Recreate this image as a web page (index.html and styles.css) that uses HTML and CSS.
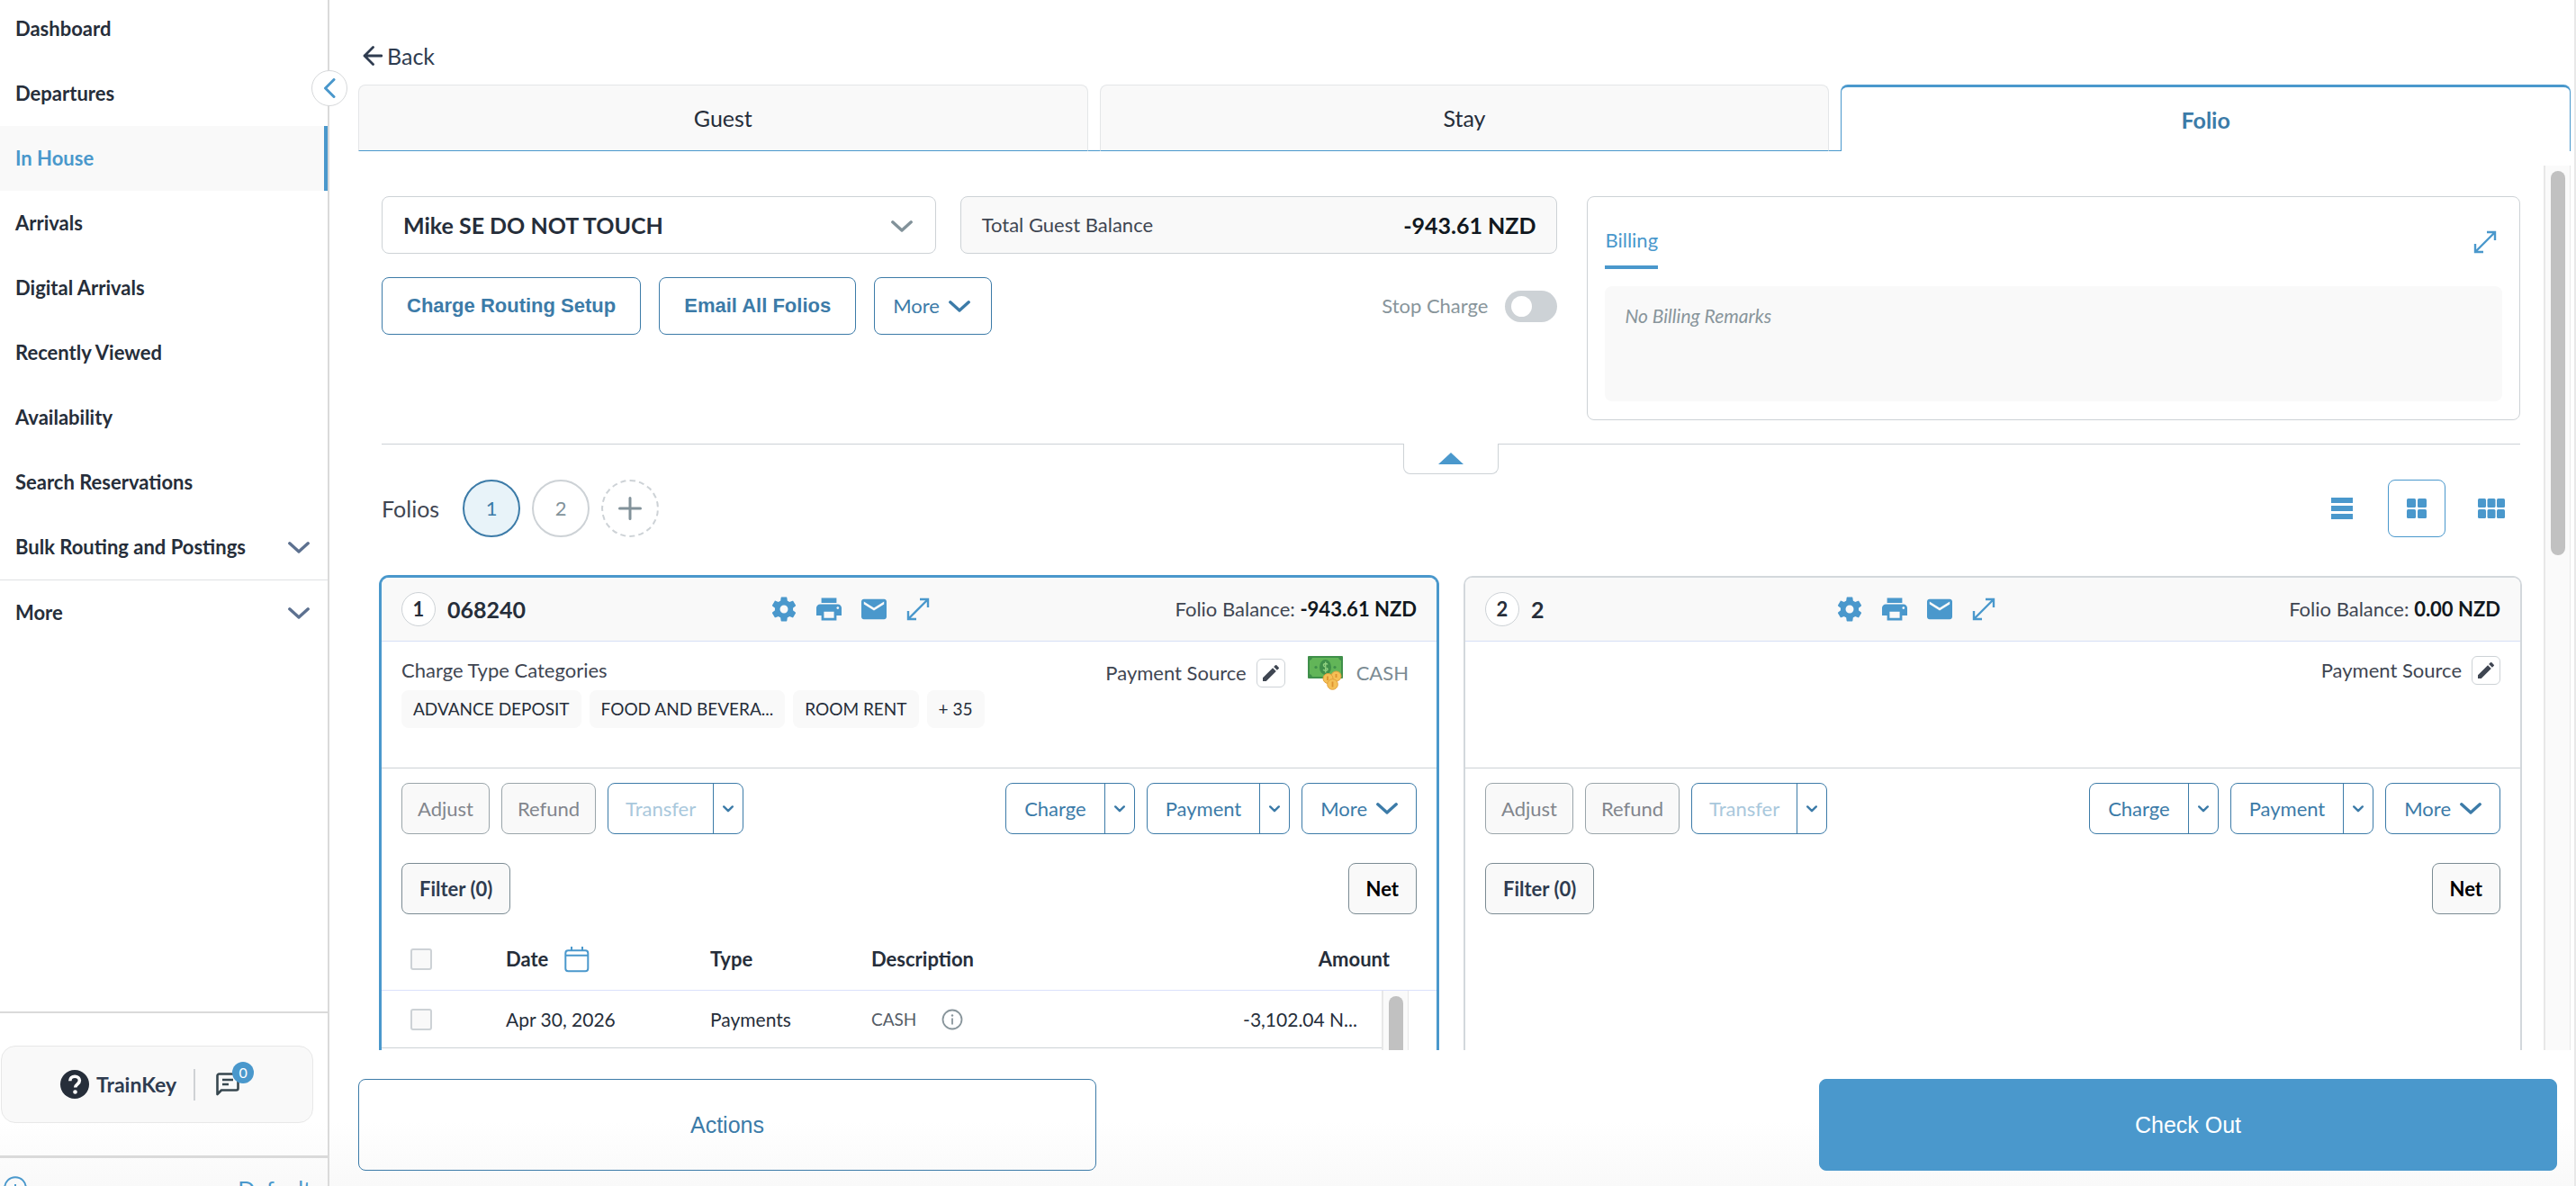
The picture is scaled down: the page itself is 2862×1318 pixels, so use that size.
FILE: index.html
```html
<!DOCTYPE html>
<html lang="en">
<head>
  <meta charset="UTF-8">
  <meta name="viewport" content="width=device-width, initial-scale=1.0">
  <title>In House - Folio</title>
  <link rel="stylesheet" href="styles.css">
</head>
<body>

  <!-- Shared icons -->
  <svg class="icon-defs" aria-hidden="true">
    <symbol id="chevron" viewBox="0 0 24 13"><path d="M1.8 1.8 12 11 22.2 1.8" fill="none" stroke="currentColor" stroke-width="3.4" stroke-linecap="round" stroke-linejoin="round"/></symbol>
    <symbol id="chevron-small" viewBox="0 0 12 8"><path d="M1.2 1.4 6 6.2 10.8 1.4" fill="none" stroke="currentColor" stroke-width="2.4" stroke-linecap="round" stroke-linejoin="round"/></symbol>
    <symbol id="expand" viewBox="0 0 26 26"><path d="M15 2H24V11M24 2 2 24M2 15V24H11" fill="none" stroke="currentColor" stroke-width="2.4"/></symbol>
    <symbol id="gear" viewBox="2 2 20 20"><path fill="currentColor" d="M19.14 12.94c.04-.3.06-.61.06-.94 0-.32-.02-.64-.07-.94l2.03-1.58c.18-.14.23-.41.12-.61l-1.92-3.32c-.12-.22-.37-.29-.59-.22l-2.39.96c-.5-.38-1.03-.7-1.62-.94l-.36-2.54c-.04-.24-.24-.41-.48-.41h-3.84c-.24 0-.43.17-.47.41l-.36 2.54c-.59.24-1.13.57-1.62.94l-2.39-.96c-.22-.08-.47 0-.59.22L2.74 8.87c-.12.21-.08.47.12.61l2.03 1.58c-.05.3-.09.63-.09.94s.02.64.07.94l-2.03 1.58c-.18.14-.23.41-.12.61l1.92 3.32c.12.22.37.29.59.22l2.39-.96c.5.38 1.03.7 1.62.94l.36 2.54c.05.24.24.41.48.41h3.84c.24 0 .44-.17.47-.41l.36-2.54c.59-.24 1.13-.56 1.62-.94l2.39.96c.22.08.47 0 .59-.22l1.92-3.32c.12-.22.07-.47-.12-.61l-2.01-1.58zM12 15.2a3.2 3.2 0 1 1 0-6.4 3.2 3.2 0 0 1 0 6.4z"/></symbol>
    <symbol id="printer" viewBox="2 2 20 20"><path fill="currentColor" d="M19 8H5c-1.66 0-3 1.34-3 3v6h4v4h12v-4h4v-6c0-1.66-1.34-3-3-3zm-3 11H8v-5h8v5zm3-7c-.55 0-1-.45-1-1s.45-1 1-1 1 .45 1 1-.45 1-1 1zm-1-9H6v4h12V3z"/></symbol>
    <symbol id="mail" viewBox="2 2 20 20"><path fill="currentColor" d="M20 4H4c-1.1 0-2 .9-2 2v12c0 1.1.9 2 2 2h16c1.1 0 2-.9 2-2V6c0-1.1-.9-2-2-2zm0 4-8 5-8-5V6l8 5 8-5v2z"/></symbol>
    <symbol id="pencil" viewBox="0 0 24 24"><path fill="currentColor" d="M3 17.25V21h3.75L17.81 9.94l-3.75-3.75L3 17.25zM20.71 7.04a1 1 0 0 0 0-1.41l-2.34-2.34a1 1 0 0 0-1.41 0l-1.83 1.83 3.75 3.75 1.83-1.83z"/></symbol>
  </svg>

  <div class="app">
    <aside class="sidebar">
      <button type="button" class="collapse-btn" aria-label="Collapse menu">
        <svg width="14" height="22" viewBox="0 0 14 22"><path d="M12 1.5 2.5 11 12 20.5" fill="none" stroke="currentColor" stroke-width="3" stroke-linecap="round" stroke-linejoin="round"/></svg>
      </button>

      <nav class="nav">
        <a href="#">Dashboard</a>
        <a href="#">Departures</a>
        <a href="#" class="active">In House</a>
        <a href="#">Arrivals</a>
        <a href="#">Digital Arrivals</a>
        <a href="#">Recently Viewed</a>
        <a href="#">Availability</a>
        <a href="#">Search Reservations</a>
        <a href="#" class="group">Bulk Routing and Postings <svg class="chevron"><use href="#chevron"/></svg></a>
        <a href="#">More <svg class="chevron"><use href="#chevron"/></svg></a>
      </nav>

      <div class="help">
        <div class="help-box">
          <svg width="32" height="32" viewBox="0 0 32 32"><circle cx="16" cy="16" r="16" fill="#262e3a"/><path d="M10.8 12.2c0-3 2.2-5 5.3-5s5.3 1.9 5.3 4.6c0 4-4.7 4-4.7 7.7" fill="none" stroke="#fff" stroke-width="3.6"/><circle cx="16.5" cy="24.5" r="2.3" fill="#fff"/></svg>
          <span class="help-name">TrainKey</span>
          <span class="help-divider"></span>
          <button type="button" class="chat-btn" aria-label="Messages">
            <svg width="26" height="26" viewBox="0 0 26 26"><path d="M1.5 24V3.5a2 2 0 0 1 2-2h19a2 2 0 0 1 2 2v14a2 2 0 0 1-2 2H6z" fill="none" stroke="currentColor" stroke-width="2.6" stroke-linejoin="round"/><path d="M7 8h12M7 13h7" stroke="currentColor" stroke-width="2.4"/></svg>
            <span class="badge">0</span>
          </button>
        </div>
      </div>

      <div class="default-row">
        <svg width="26" height="26" viewBox="0 0 26 26"><circle cx="13" cy="13" r="11.8" fill="none" stroke="currentColor" stroke-width="2"/><path d="M13 9v10" stroke="currentColor" stroke-width="2"/></svg>
        <a href="#">Default</a>
      </div>
    </aside>

    <main class="main">
      <a href="#" class="back">
        <svg width="22" height="22" viewBox="0 0 22 22"><path d="M21 11H2M11.5 1.5 2 11l9.5 9.5" fill="none" stroke="currentColor" stroke-width="2.8" stroke-linecap="round" stroke-linejoin="round"/></svg>
        Back
      </a>

      <div class="tabs">
        <button type="button" class="tab">Guest</button>
        <span class="tab-gap"></span>
        <button type="button" class="tab">Stay</button>
        <span class="tab-gap"></span>
        <button type="button" class="tab active">Folio</button>
      </div>

      <div class="scroller">
        <div class="content">

          <section class="summary">
            <div class="account">
              <div class="select-wrap">
                <select aria-label="Guest">
                  <option>Mike SE DO NOT TOUCH</option>
                </select>
                <svg class="chevron"><use href="#chevron"/></svg>
              </div>
              <div class="balance">
                <span>Total Guest Balance</span>
                <strong>-943.61 NZD</strong>
              </div>
              <div class="account-actions">
                <button type="button" class="btn-system">Charge Routing Setup</button>
                <button type="button" class="btn-system">Email All Folios</button>
                <button type="button" class="btn-outline tall">More <svg class="chevron"><use href="#chevron"/></svg></button>
                <label class="stop-charge" for="stopCharge">Stop Charge</label>
                <input type="checkbox" id="stopCharge" class="toggle">
              </div>
            </div>

            <div class="billing">
              <div class="billing-head">
                <button type="button" class="billing-tab">Billing</button>
                <button type="button" class="icon-btn" aria-label="Expand"><svg width="26" height="26"><use href="#expand"/></svg></button>
              </div>
              <div class="remarks">No Billing Remarks</div>
            </div>

            <button type="button" class="section-toggle" aria-label="Hide summary">
              <svg width="28" height="13" viewBox="0 0 28 13"><path d="M14 0 28 13H0z" fill="currentColor"/></svg>
            </button>
          </section>

          <div class="folio-bar">
            <span class="folio-title">Folios</span>
            <button type="button" class="circle active">1</button>
            <button type="button" class="circle">2</button>
            <button type="button" class="circle add" aria-label="Add folio">
              <svg width="26" height="26" viewBox="0 0 26 26"><path d="M13 1.5v23M1.5 13h23" stroke="currentColor" stroke-width="3" stroke-linecap="round"/></svg>
            </button>
            <div class="views">
              <button type="button" class="view" aria-label="List view">
                <svg width="24" height="24" viewBox="0 0 24 24"><path d="M0 0h24v6H0zM0 9h24v6H0zM0 18h24v6H0z" fill="currentColor"/></svg>
              </button>
              <button type="button" class="view active" aria-label="Two column view">
                <svg width="22" height="22" viewBox="0 0 22 22" fill="currentColor"><rect width="10" height="10" rx="1.5"/><rect x="12" width="10" height="10" rx="1.5"/><rect y="12" width="10" height="10" rx="1.5"/><rect x="12" y="12" width="10" height="10" rx="1.5"/></svg>
              </button>
              <button type="button" class="view" aria-label="Three column view">
                <svg width="30" height="22" viewBox="0 0 30 22" fill="currentColor"><rect width="9" height="10" rx="1.5"/><rect x="10.500" width="9" height="10" rx="1.5"/><rect x="21" width="9" height="10" rx="1.5"/><rect y="12" width="9" height="10" rx="1.5"/><rect x="10.500" y="12" width="9" height="10" rx="1.5"/><rect x="21" y="12" width="9" height="10" rx="1.5"/></svg>
              </button>
            </div>
          </div>

          <div class="folios">
            <article class="folio active">
              <header class="folio-head">
                <h2><span class="num">1</span> 068240</h2>
                <div class="folio-tools">
                  <button type="button" class="icon-btn" aria-label="Settings"><svg width="28" height="28"><use href="#gear"/></svg></button>
                  <button type="button" class="icon-btn" aria-label="Print"><svg width="28" height="28"><use href="#printer"/></svg></button>
                  <button type="button" class="icon-btn" aria-label="Email"><svg width="28" height="28"><use href="#mail"/></svg></button>
                  <button type="button" class="icon-btn" aria-label="Expand"><svg width="26" height="26"><use href="#expand"/></svg></button>
                </div>
                <div>Folio Balance: <strong>-943.61 NZD</strong></div>
              </header>

              <div class="folio-info">
                <div class="categories">
                  <div>Charge Type Categories</div>
                  <ul class="chips">
                    <li>ADVANCE DEPOSIT</li>
                    <li>FOOD AND BEVERA...</li>
                    <li>ROOM RENT</li>
                    <li>+ 35</li>
                  </ul>
                </div>
                <div class="source">
                  Payment Source
                  <button type="button" class="edit-btn" aria-label="Edit payment source"><svg width="24" height="24"><use href="#pencil"/></svg></button>
                  <span class="method">
                    <svg width="40" height="38" viewBox="0 0 40 38">
                      <rect width="39" height="25" rx="1" fill="#3f8f4a"/>
                      <path d="M5 2h29a4 4 0 0 0 3 3v15a4 4 0 0 0-3 3H5a4 4 0 0 0-3-3V5a4 4 0 0 0 3-3z" fill="#62b558"/>
                      <ellipse cx="19.5" cy="12.5" rx="6.5" ry="8.5" fill="#3f8f4a"/>
                      <path d="M22 9.5c-.6-1.2-4.6-1.6-4.6.8 0 2.6 4.6 1.6 4.6 4.2 0 2.4-4.2 2.2-4.8.6M19.7 6.5v12" fill="none" stroke="#8fd07f" stroke-width="1.4"/>
                      <circle cx="9" cy="12.5" r="1.6" fill="#3f8f4a"/><circle cx="30" cy="12.5" r="1.6" fill="#3f8f4a"/>
                      <g fill="#f5c056" stroke="#e2a03c"><circle cx="31.5" cy="22.5" r="5.5"/><circle cx="22.5" cy="25" r="5.5"/><circle cx="27.5" cy="31.5" r="5.8"/></g>
                      <path d="M27.5 28.5v6M22 22.5v4.5M31.5 20v4" stroke="#dd9230" stroke-width="1.8"/>
                    </svg>
                    CASH
                  </span>
                </div>
              </div>

              <div class="folio-body">
                <div class="row">
                  <button type="button" class="btn-gray" disabled>Adjust</button>
                  <button type="button" class="btn-gray" disabled>Refund</button>
                  <div class="split">
                    <button type="button" disabled>Transfer</button>
                    <button type="button" class="arrow" aria-label="Transfer options"><svg width="12" height="8"><use href="#chevron-small"/></svg></button>
                  </div>
                  <div class="row-right">
                    <div class="split">
                      <button type="button">Charge</button>
                      <button type="button" class="arrow" aria-label="Charge options"><svg width="12" height="8"><use href="#chevron-small"/></svg></button>
                    </div>
                    <div class="split">
                      <button type="button">Payment</button>
                      <button type="button" class="arrow" aria-label="Payment options"><svg width="12" height="8"><use href="#chevron-small"/></svg></button>
                    </div>
                    <button type="button" class="btn-outline">More <svg class="chevron"><use href="#chevron"/></svg></button>
                  </div>
                </div>
                <div class="row">
                  <button type="button" class="btn-filter">Filter (0)</button>
                  <div class="row-right"><button type="button" class="btn-filter net">Net</button></div>
                </div>
              </div>

              <table class="charges">
                <colgroup>
                  <col class="col-check"><col class="col-date"><col class="col-type"><col><col class="col-amount"><col class="col-rail">
                </colgroup>
                <thead>
                  <tr>
                    <th class="check"><input type="checkbox" aria-label="Select all"></th>
                    <th>
                      <span class="date-head">Date
                        <svg width="28" height="29" viewBox="0 0 28 29"><rect x="1.3" y="4.3" width="25" height="23" rx="3" fill="none" stroke="currentColor" stroke-width="2"/><path d="M1.3 9.8h25M8 0v4M20 0v4" stroke="currentColor" stroke-width="2"/></svg>
                      </span>
                    </th>
                    <th>Type</th>
                    <th>Description</th>
                    <th class="amount" colspan="2">Amount</th>
                  </tr>
                </thead>
                <tbody>
                  <tr>
                    <td class="check"><input type="checkbox" aria-label="Select charge"></td>
                    <td>Apr 30, 2026</td>
                    <td>Payments</td>
                    <td>
                      <span class="desc">CASH
                        <svg width="24" height="24" viewBox="0 0 24 24"><circle cx="12" cy="12" r="10.5" fill="none" stroke="currentColor" stroke-width="1.8"/><path d="M12 10.5v7" stroke="currentColor" stroke-width="1.8"/><circle cx="12" cy="7.5" r="1.2" fill="currentColor"/></svg>
                      </span>
                    </td>
                    <td class="amount">-3,102.04 N...</td>
                    <td class="rail-cell"><div class="rail"><div class="thumb"></div></div></td>
                  </tr>
                </tbody>
              </table>
            </article>

            <article class="folio">
              <header class="folio-head">
                <h2><span class="num">2</span> 2</h2>
                <div class="folio-tools">
                  <button type="button" class="icon-btn" aria-label="Settings"><svg width="28" height="28"><use href="#gear"/></svg></button>
                  <button type="button" class="icon-btn" aria-label="Print"><svg width="28" height="28"><use href="#printer"/></svg></button>
                  <button type="button" class="icon-btn" aria-label="Email"><svg width="28" height="28"><use href="#mail"/></svg></button>
                  <button type="button" class="icon-btn" aria-label="Expand"><svg width="26" height="26"><use href="#expand"/></svg></button>
                </div>
                <div>Folio Balance: <strong>0.00 NZD</strong></div>
              </header>

              <div class="folio-info">
                <div class="source">
                  Payment Source
                  <button type="button" class="edit-btn" aria-label="Edit payment source"><svg width="24" height="24"><use href="#pencil"/></svg></button>
                </div>
              </div>

              <div class="folio-body">
                <div class="row">
                  <button type="button" class="btn-gray" disabled>Adjust</button>
                  <button type="button" class="btn-gray" disabled>Refund</button>
                  <div class="split">
                    <button type="button" disabled>Transfer</button>
                    <button type="button" class="arrow" aria-label="Transfer options"><svg width="12" height="8"><use href="#chevron-small"/></svg></button>
                  </div>
                  <div class="row-right">
                    <div class="split">
                      <button type="button">Charge</button>
                      <button type="button" class="arrow" aria-label="Charge options"><svg width="12" height="8"><use href="#chevron-small"/></svg></button>
                    </div>
                    <div class="split">
                      <button type="button">Payment</button>
                      <button type="button" class="arrow" aria-label="Payment options"><svg width="12" height="8"><use href="#chevron-small"/></svg></button>
                    </div>
                    <button type="button" class="btn-outline">More <svg class="chevron"><use href="#chevron"/></svg></button>
                  </div>
                </div>
                <div class="row">
                  <button type="button" class="btn-filter">Filter (0)</button>
                  <div class="row-right"><button type="button" class="btn-filter net">Net</button></div>
                </div>
              </div>
            </article>
          </div>

        </div>
        <div class="rail page-rail"><div class="thumb"></div></div>
      </div>

      <footer class="footer">
        <button type="button" class="footer-btn">Actions</button>
        <button type="button" class="footer-btn primary">Check Out</button>
      </footer>
    </main>
  </div>

</body>
</html>
```
FILE: styles.css
```css
* {
  margin: 0;
  padding: 0;
  box-sizing: border-box;
}

body {
  font-family: Lato, "Open Sans", sans-serif;
  font-size: 22px;
  line-height: 28px;
  color: #3f4652;
  background: #fff;
}

a {
  color: inherit;
  text-decoration: none;
}

button, select {
  font: inherit;
  color: inherit;
  background: none;
  border: none;
  cursor: pointer;
}

svg {
  display: block;
  flex: none;
}

.icon-defs {
  position: absolute;
  width: 0;
  height: 0;
}

.chevron {
  width: 24px;
  height: 13px;
}

.app {
  display: flex;
  height: 100vh;
  overflow: hidden;
  background: linear-gradient(to top, #f9f9f9, #fff 72px);
}

/* Sidebar */
.sidebar {
  position: relative;
  display: flex;
  flex-direction: column;
  flex: none;
  width: 366px;
  border-right: 2px solid #dadada;
}

.collapse-btn {
  position: absolute;
  top: 78px;
  right: -22px;
  display: flex;
  align-items: center;
  justify-content: center;
  width: 40px;
  height: 40px;
  background: #fff;
  border: 1px solid #d6d8da;
  border-radius: 50%;
  color: #4a98cc;
}

.nav {
  flex: 1;
  margin-top: -4px;
  font-weight: 700;
  color: #262e3a;
}

.nav a {
  display: flex;
  align-items: center;
  justify-content: space-between;
  height: 72px;
  padding: 0 20px 0 17px;
}

.nav a.active {
  color: #4a98cc;
  background: #f9f9f9;
  border-right: 4px solid #4a98cc;
}

.nav a.group {
  height: 73px;
  border-bottom: 1px solid #dfe1e3;
}

.nav .chevron {
  color: #5d7190;
}

.help {
  padding: 36px 16px 36px 1px;
  border-top: 2px solid #dadada;
}

.help-box {
  display: flex;
  align-items: center;
  height: 86px;
  padding-left: 65px;
  background: #f9f9f9;
  border: 1px solid #e8e8e8;
  border-radius: 16px;
}

.help-name {
  margin-left: 8px;
  font-size: 23px;
  font-weight: 700;
  color: #2f3c50;
}

.help-divider {
  width: 2px;
  height: 35px;
  margin: 0 23px 0 19px;
  background: #cfd2d5;
}

.chat-btn {
  position: relative;
  color: #37474f;
}

.badge {
  position: absolute;
  top: -12px;
  left: 18px;
  width: 24px;
  height: 24px;
  border-radius: 50%;
  background: #4a98cc;
  color: #fff;
  font-size: 16px;
  line-height: 24px;
}

.default-row {
  display: flex;
  align-items: flex-start;
  justify-content: space-between;
  height: 34px;
  padding: 20px 18px 0 4px;
  border-top: 3px solid #dadada;
  font-size: 25px;
  color: #4a98cc;
  overflow: hidden;
}

/* Main column */
.main {
  display: flex;
  flex-direction: column;
  flex: 1;
  min-width: 0;
  padding: 0 4px 0 32px;
  border-right: 2px solid #e8e8e8;
}

.back {
  display: flex;
  align-items: center;
  align-self: flex-start;
  gap: 5px;
  height: 94px;
  padding: 30px 0 0 5px;
  font-size: 25px;
  color: #2f3c50;
}

.tabs {
  display: flex;
  height: 74px;
  margin-bottom: 16px;
}

.tab {
  flex: 1;
  background: #f9f9f9;
  border: 1px solid #e4e6e8;
  border-bottom-color: #4a98cc;
  border-radius: 8px 8px 0 0;
  font-size: 25px;
  color: #262e3a;
}

.tab.active {
  background: #fff;
  border-color: #4a98cc;
  border-width: 3px 1px 0;
  font-weight: 700;
  color: #3c7ba8;
}

.tab-gap {
  width: 13px;
  border-bottom: 1px solid #4a98cc;
}

.scroller {
  display: flex;
  flex: 1;
  min-height: 0;
  overflow: hidden;
}

.content {
  flex: 1;
  min-width: 0;
  padding: 34px 26px 0 26px;
}

.rail {
  width: 30px;
  padding: 6px 6px;
  background: #fafafa;
  border: solid #e8e8e8;
  border-width: 0 1px 0 2px;
}

.thumb {
  width: 16px;
  height: 100%;
  border-radius: 8px;
  background: #c1c1c1;
}

.page-rail .thumb {
  height: 44%;
}

/* Guest summary */
.summary {
  position: relative;
  display: grid;
  grid-template-columns: 1307fr 1037fr;
  gap: 33px;
  padding-bottom: 26px;
  border-bottom: 1px solid #cdd2d6;
}

.account {
  display: grid;
  grid-template-columns: 616fr 664fr;
  grid-template-rows: 64px 64px;
  gap: 26px 27px;
}

.select-wrap {
  position: relative;
}

.select-wrap select {
  width: 100%;
  height: 64px;
  padding: 0 64px 0 23px;
  appearance: none;
  border: 1px solid #cdd2d6;
  border-radius: 8px;
  font-size: 25px;
  font-weight: 700;
  color: #262e3a;
}

.select-wrap .chevron {
  position: absolute;
  top: 27px;
  right: 26px;
  color: #82929a;
  pointer-events: none;
}

.balance {
  display: flex;
  align-items: center;
  justify-content: space-between;
  padding: 0 23px;
  background: #f9f9f9;
  border: 1px solid #cdd2d6;
  border-radius: 8px;
}

.balance strong {
  font-size: 25px;
  color: #111820;
}

.account-actions {
  grid-column: 1 / 3;
  display: flex;
  align-items: center;
}

.btn-system,
.btn-outline {
  border: 1px solid #3c7ba8;
  border-radius: 8px;
  background: #fff;
  color: #3c7ba8;
}

.btn-system {
  height: 64px;
  margin-right: 20px;
  padding: 0 27px;
  font-family: "Liberation Sans", Arial, sans-serif;
  font-weight: 700;
}

.btn-outline {
  display: flex;
  align-items: center;
  gap: 10px;
  height: 57px;
  padding: 0 20px;
}

.btn-outline.tall {
  height: 64px;
  padding: 0 23px 0 20px;
}

.stop-charge {
  margin: 0 19px 0 auto;
  color: #88959b;
}

.toggle {
  width: 58px;
  height: 35px;
  padding: 6px 7px;
  appearance: none;
  border-radius: 18px;
  background: #cdd2d6;
}

.toggle::before {
  content: "";
  display: block;
  width: 23px;
  height: 23px;
  border-radius: 50%;
  background: #fff;
}

.billing {
  height: 249px;
  padding: 26px 19px 0;
  border: 1px solid #cdd2d6;
  border-radius: 8px;
}

.billing-head {
  display: flex;
  align-items: flex-start;
  justify-content: space-between;
  margin-bottom: 19px;
}

.billing-head .icon-btn {
  padding: 11px 6px 0 0;
}

.billing-tab {
  padding: 8px 0 14px;
  border-bottom: 4px solid #4a98cc;
  color: #4a98cc;
}

.icon-btn {
  color: #4a98cc;
}

.remarks {
  height: 128px;
  padding: 19px 22px;
  border-radius: 8px;
  background: #f9f9f9;
  font-size: 21px;
  font-style: italic;
  color: #88959b;
}

.section-toggle {
  position: absolute;
  top: 100%;
  left: 50%;
  display: flex;
  align-items: center;
  justify-content: center;
  width: 106px;
  height: 34px;
  margin-left: -53px;
  background: #fff;
  border: 1px solid #cdd2d6;
  border-top: none;
  border-radius: 0 0 8px 8px;
  color: #4a98cc;
}

/* Folio picker */
.folio-bar {
  display: flex;
  align-items: center;
  gap: 13px;
  margin: 39px 0 45px;
}

.folio-title {
  margin-right: 13px;
  font-size: 25px;
}

.circle {
  display: flex;
  align-items: center;
  justify-content: center;
  width: 64px;
  height: 64px;
  border: 2px solid #cdd2d6;
  border-radius: 50%;
  color: #82929a;
}

.circle.active {
  border-color: #3c7ba8;
  background: #e8f3f9;
  color: #3c7ba8;
}

.circle.add {
  border-style: dashed;
}

.views {
  display: flex;
  gap: 19px;
  margin-left: auto;
}

.view {
  display: flex;
  align-items: center;
  justify-content: center;
  width: 64px;
  height: 64px;
  color: #4a98cc;
}

.view.active {
  border: 1px solid #4a98cc;
  border-radius: 8px;
}

/* Folio cards */
.folios {
  display: grid;
  grid-template-columns: 1fr 1fr;
  gap: 32px;
}

.folio {
  min-width: 0;
  padding-bottom: 40px;
  border-radius: 8px;
  box-shadow: 0 0 0 2px #d3d8dc;
}

.folio.active {
  box-shadow: 0 0 0 3px #4a98cc;
}

.folio-head {
  display: flex;
  align-items: center;
  justify-content: space-between;
  height: 71px;
  padding: 0 22px;
  background: #f9f9f9;
  border-bottom: 1px solid #d6dff5;
  border-radius: 8px 8px 0 0;
}

.folio-head strong {
  color: #111820;
}

.folio-head h2 {
  display: flex;
  align-items: center;
  gap: 13px;
  font-size: 25px;
  color: #262e3a;
}

.num {
  width: 38px;
  height: 38px;
  border: 1px solid #cdd2d6;
  border-radius: 50%;
  background: #fff;
  font-size: 22px;
  line-height: 36px;
  text-align: center;
}

.folio-tools {
  display: flex;
  align-items: center;
  gap: 22px;
}

.folio-info {
  display: flex;
  align-items: flex-start;
  height: 141px;
  padding: 16px 22px 0;
  border-bottom: 1px solid #cdd2d6;
}

.chips {
  display: flex;
  gap: 9px;
  margin-top: 8px;
  list-style: none;
}

.chips li {
  height: 42px;
  padding: 0 13px;
  border-radius: 8px;
  background: #f9f9f9;
  font-size: 19px;
  line-height: 42px;
  color: #262e3a;
}

.categories {
  padding-top: 2px;
}

.source {
  display: flex;
  align-items: center;
  gap: 11px;
  margin-left: auto;
}

.edit-btn {
  display: flex;
  align-items: center;
  justify-content: center;
  width: 32px;
  height: 32px;
  background: #fff;
  border: 1px solid #cdd2d6;
  border-radius: 6px;
}

.method {
  display: flex;
  align-items: center;
  gap: 14px;
  margin-left: 14px;
  padding-right: 9px;
  color: #7b8b93;
}

.folio-body {
  display: flex;
  flex-direction: column;
  gap: 32px;
  padding: 16px 22px 0;
}

.row,
.row-right {
  display: flex;
  gap: 13px;
}

.row-right {
  margin-left: auto;
}

.btn-gray,
.btn-filter {
  height: 57px;
  border: 1px solid #9aa5aa;
  border-radius: 8px;
  background: #f9f9f9;
}

.btn-gray {
  padding: 0 17px;
  color: #82868d;
}

.btn-filter {
  padding: 0 19px;
  border-color: #7b8b93;
  font-weight: 700;
  color: #2f3c50;
}

.btn-filter.net {
  color: #000;
}

.split {
  display: flex;
  height: 57px;
  border: 1px solid #3c7ba8;
  border-radius: 8px;
  color: #3c7ba8;
}

.split button {
  padding: 0 19px;
}

.row-right .split button {
  padding: 0 20px;
}

.split button:disabled {
  color: #a9c8dc;
}

.split .arrow,
.row-right .split .arrow {
  padding: 0 10px;
  border-left: 1px solid #3c7ba8;
}

/* Charges table */
.charges {
  width: 100%;
  table-layout: fixed;
  border-collapse: separate;
  border-spacing: 0;
  margin-top: 16px;
  color: #262e3a;
}

.col-check {
  width: 138px;
}

.col-date {
  width: 227px;
}

.col-type {
  width: 179px;
}

.col-amount {
  width: 240px;
}

.col-rail {
  width: 61px;
}

.charges th {
  height: 69px;
  border-bottom: 1px solid #dbe1fb;
  text-align: left;
}

.charges td {
  height: 64px;
  border-bottom: 1px solid #cdd2d6;
  font-size: 21px;
}

.charges .check {
  padding-left: 32px;
}

.charges input {
  display: block;
  width: 24px;
  height: 24px;
  appearance: none;
  border: 2px solid #cdd2d6;
  border-radius: 3px;
  background: #f9f9f9;
}

.date-head {
  display: flex;
  align-items: center;
  gap: 18px;
}

.date-head svg {
  color: #4a98cc;
}

.desc {
  display: flex;
  align-items: center;
  gap: 28px;
  font-size: 19px;
  color: #555c66;
}

.desc svg {
  color: #88959b;
}

.charges td.amount {
  padding-right: 27px;
  text-align: right;
}

.charges th.amount {
  padding-right: 52px;
  text-align: right;
}

.charges .rail-cell {
  position: relative;
  border-bottom: none;
}

.rail-cell .rail {
  position: absolute;
  top: 0;
  left: 0;
  height: 260px;
}

/* Footer */
.footer {
  display: flex;
  justify-content: space-between;
  padding: 32px 15px 17px 0;
}

.footer-btn {
  width: 34%;
  max-width: 820px;
  height: 102px;
  border: 1px solid #3c7ba8;
  border-radius: 8px;
  font-family: "Liberation Sans", Arial, sans-serif;
  font-size: 25px;
  color: #3c7ba8;
}

.footer-btn.primary {
  border-color: #4a98cc;
  background: #4a98cc;
  color: #fff;
}
```
